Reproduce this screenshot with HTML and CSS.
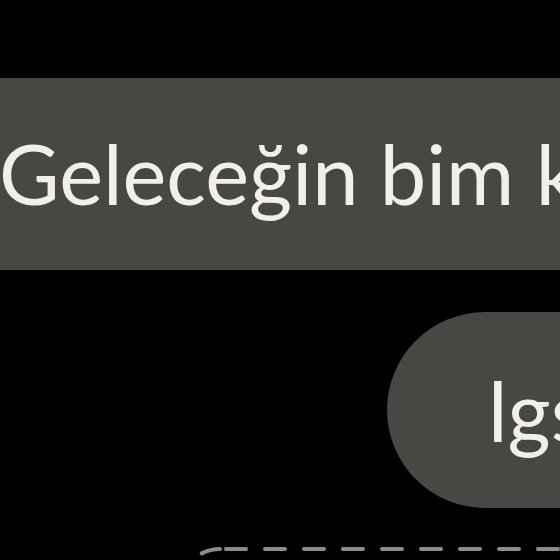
FILE: index.html
```html
<!DOCTYPE html>
<html lang="tr">
<head>
<meta charset="utf-8">
<link rel="stylesheet" href="styles.css">
</head>
<body>
<main class="chat">
  <div class="banner"><span class="banner-text">Geleceğin bim kişisi</span></div>
  <div class="row-right"><div class="bubble">lgs sınavı</div></div>
  <div class="dashed-box">
    <svg class="dash-svg" width="500" height="140" viewBox="0 0 500 140"><rect x="2" y="2" width="496" height="136" rx="40" ry="40" fill="none" stroke="#8c8c89" stroke-width="4" stroke-dasharray="20 19" stroke-dashoffset="-6" stroke-linecap="round"/></svg>
  </div>
</main>
</body>
</html>
```
FILE: styles.css
```css
html, body {
  margin: 0;
  padding: 0;
  background: #000;
  width: 560px;
  height: 560px;
  overflow: hidden;
}
.chat {
  display: flex;
  flex-direction: column;
  padding-top: 78px;
  font-family: Lato, "Noto Sans", sans-serif;
  color: #f1efe8;
}
.banner {
  height: 192px;
  background: #474743;
  display: flex;
  align-items: center;
  white-space: nowrap;
  overflow: hidden;
}
.banner-text {
  font-size: 83px;
  line-height: 1;
  margin-left: -1px;
  padding-bottom: 2px;
}
.row-right {
  margin-top: 42px;
  display: flex;
  padding-left: 387px;
}
.bubble {
  height: 196px;
  width: 400px;
  flex-shrink: 0;
  background: #474743;
  border-radius: 98px;
  display: flex;
  align-items: center;
  padding-left: 101px;
  font-size: 83px;
  white-space: nowrap;
  box-sizing: border-box;
}
.dashed-box {
  margin-top: 39px;
  margin-left: 178px;
  width: 500px;
  height: 140px;
  flex-shrink: 0;
}
.dash-svg {
  display: block;
}
```
